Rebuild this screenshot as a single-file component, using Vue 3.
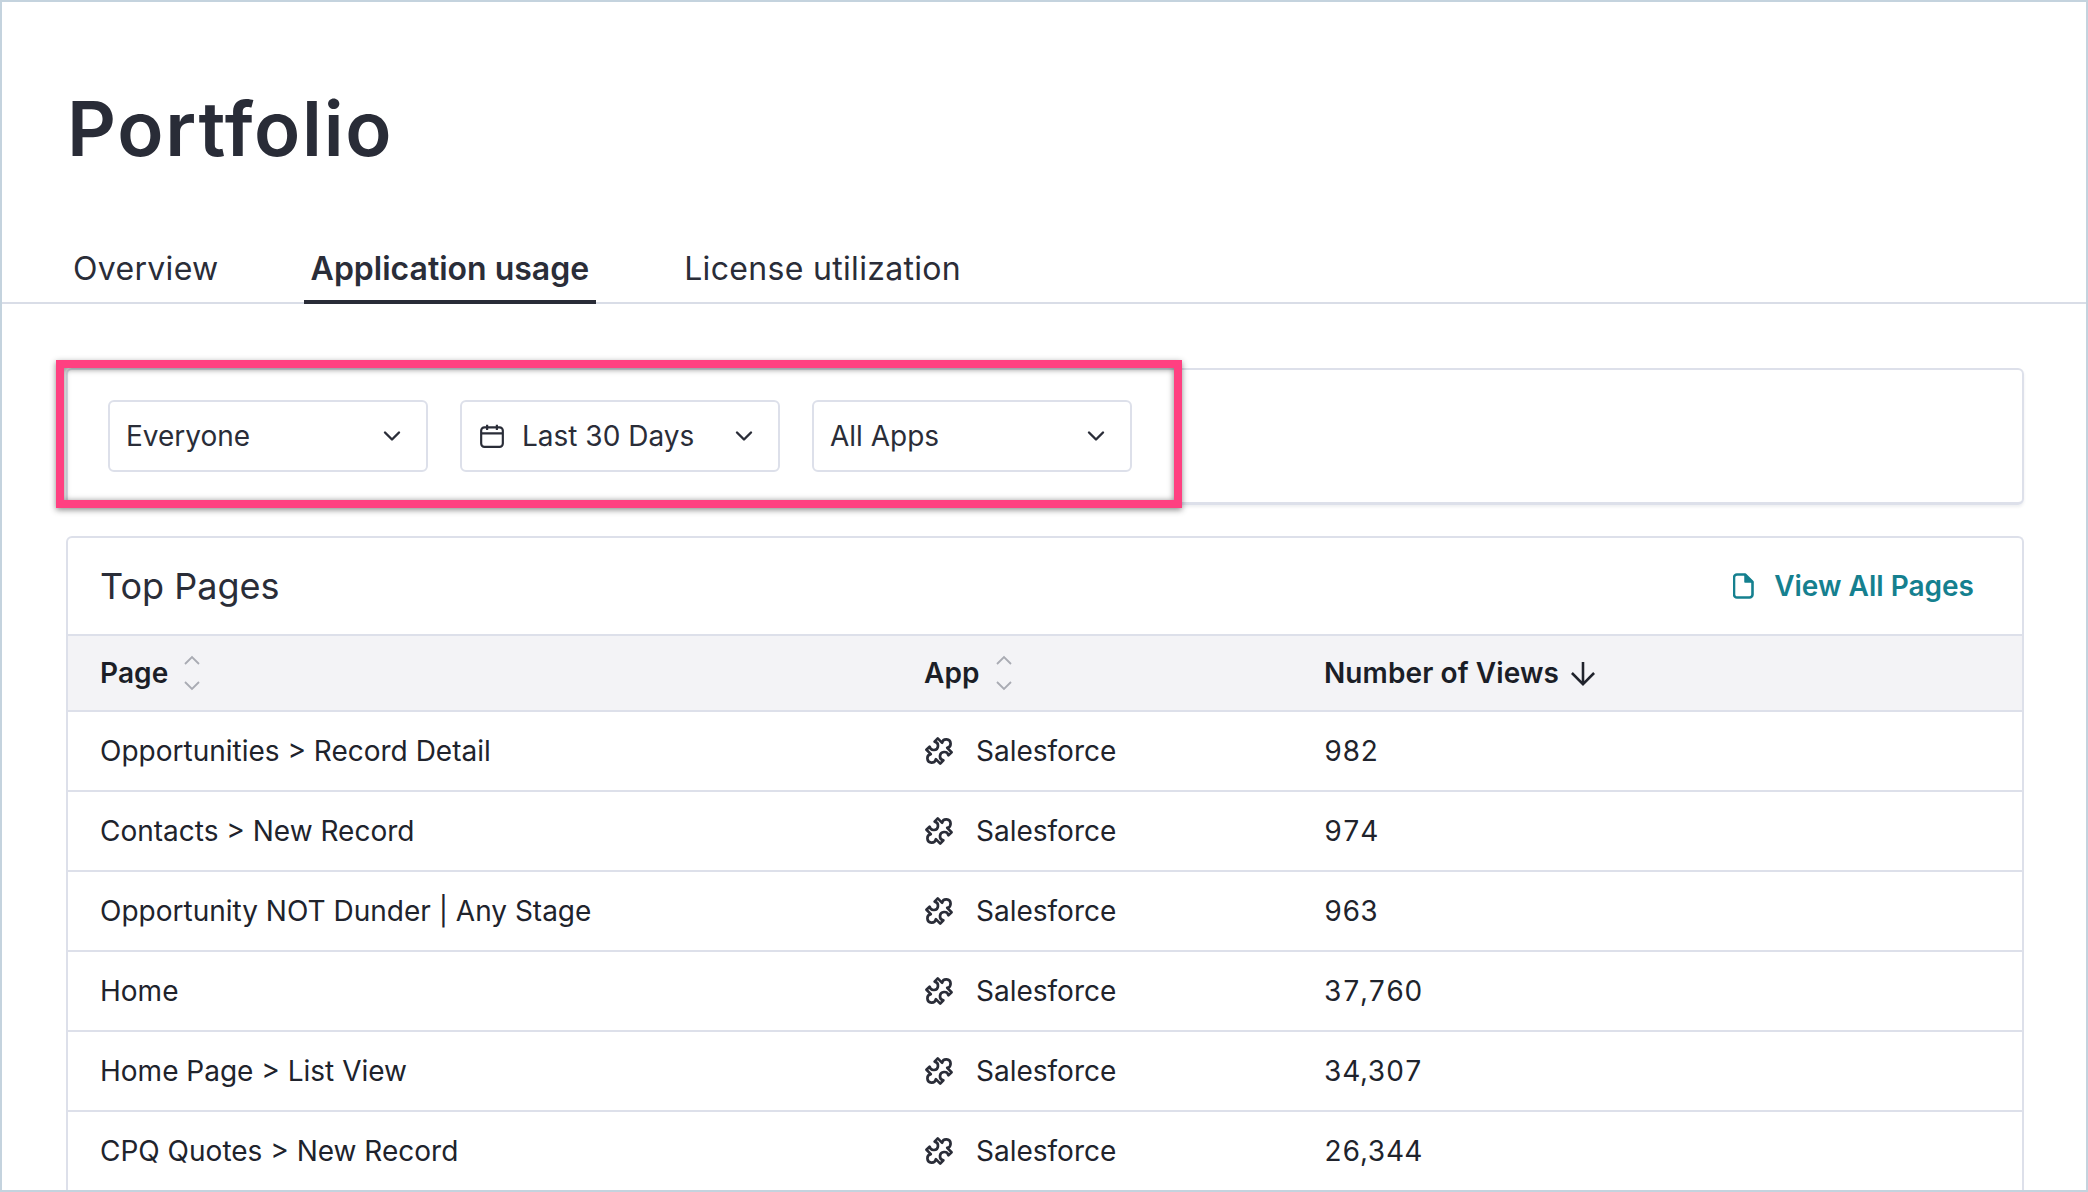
<script setup>
const tabs = [
  { label: 'Overview', active: false },
  { label: 'Application usage', active: true },
  { label: 'License utilization', active: false },
]
const rows = [
  ['Opportunities > Record Detail', '982'],
  ['Contacts > New Record', '974'],
  ['Opportunity NOT Dunder | Any Stage', '963'],
  ['Home', '37,760'],
  ['Home Page > List View', '34,307'],
  ['CPQ Quotes > New Record', '26,344'],
]
</script>

<template>
  <div class="page">
    <h1 class="title">Portfolio</h1>
    <nav class="tabs">
      <a v-for="t in tabs" :key="t.label" class="tab" :class="{ active: t.active }">{{ t.label }}</a>
    </nav>
    <main class="content">
      <section class="filters">
        <div class="select">
          <span>Everyone</span>
          <svg class="chev" viewBox="0 0 24 24"><path d="M5 8.500l7 7 7-7" /></svg>
        </div>
        <div class="select">
          <svg class="cal" viewBox="0 0 24 24"><rect x="2" y="4" width="20" height="18" rx="3" /><path d="M2 9.500h20M7.500 1.500v5M16.500 1.500v5" /></svg>
          <span class="grow">Last 30 Days</span>
          <svg class="chev" viewBox="0 0 24 24"><path d="M5 8.500l7 7 7-7" /></svg>
        </div>
        <div class="select">
          <span>All Apps</span>
          <svg class="chev" viewBox="0 0 24 24"><path d="M5 8.500l7 7 7-7" /></svg>
        </div>
        <div class="highlight"></div>
      </section>
      <section class="card">
        <header class="card-head">
          <h2>Top Pages</h2>
          <a class="link">
            <svg class="doc" viewBox="0 0 21 26"><path d="M4 1.500h8l7.500 7.500v12.500a3 3 0 0 1-3 3H4a3 3 0 0 1-3-3V4.500A3 3 0 0 1 4 1.500z" /><path class="fold" d="M12 1.500v7.500h7.500z" /></svg>
            View All Pages
          </a>
        </header>
        <div class="row thead">
          <div class="th">Page
            <svg class="sort" viewBox="0 0 16 36"><path d="M1 9l7-7 7 7M1 27l7 7 7-7" /></svg>
          </div>
          <div class="th">App
            <svg class="sort" viewBox="0 0 16 36"><path d="M1 9l7-7 7 7M1 27l7 7 7-7" /></svg>
          </div>
          <div class="th arrow-th">Number of Views
            <svg class="arrow" viewBox="0 0 24 24"><path d="M12 2.500v19M2.500 12l9.500 9.500 9.500-9.500" /></svg>
          </div>
        </div>
        <div v-for="r in rows" :key="r[0]" class="row tr">
          <div>{{ r[0] }}</div>
          <div class="app">
            <svg class="puzzle" viewBox="3 3 18 18"><path transform="rotate(45 12 12)" d="M6.500 7.500H10a2.400 2.400 0 1 1 4 0h3.500V10a2.400 2.400 0 1 0 0 4v2.500H14a2.400 2.400 0 1 1-4 0H6.500V14a2.400 2.400 0 1 0 0-4z" /></svg>
            Salesforce
          </div>
          <div class="num">{{ r[1] }}</div>
        </div>
      </section>
    </main>
  </div>
</template>

<style>
html, body { margin: 0; background: #fff; }
</style>

<style scoped>
* { box-sizing: border-box; }
.page {
  width: 2088px;
  height: 1192px;
  border: 2px solid #c4d3de;
  overflow: hidden;
  background: #fff;
  font-family: Inter, "Liberation Sans", sans-serif;
  color: #20232c;
  display: flex;
  flex-direction: column;
}
.title {
  margin: 0;
  padding: 82px 0 0 65px;
  font-size: 76px;
  line-height: 88px;
  font-weight: 600;
  letter-spacing: 1.700px;
  color: #292c37;
}
.tabs {
  margin-top: 62px;
  height: 70px;
  padding-left: 64px;
  display: flex;
  gap: 78px;
  border-bottom: 2px solid #d9dde7;
}
.tab {
  font-size: 32px;
  line-height: 70px;
  letter-spacing: 0.01em;
  padding: 0 7px;
  height: 70px;
  color: #2a2d38;
}
.tab.active {
  font-weight: 600;
  letter-spacing: 0;
  margin-right: 3px;
  border-bottom: 4px solid #292c37;
}
.content {
  flex: 1;
  min-height: 0;
  padding: 64px 62px 0 64px;
  display: flex;
  flex-direction: column;
  gap: 31px;
}
.filters {
  position: relative;
  flex: none;
  height: 137px;
  border: 2px solid #dde0ea;
  border-bottom-width: 3px;
  border-radius: 6px;
  padding: 30px 40px;
  display: flex;
  gap: 32px;
  box-shadow: 0 2px 3px rgba(40, 50, 80, 0.08);
}
.select {
  width: 320px;
  height: 72px;
  border: 2px solid #dde0ea;
  border-radius: 6px;
  padding: 0 22px 0 16px;
  display: flex;
  align-items: center;
  justify-content: space-between;
  font-size: 28px;
  color: #2a2d38;
}
.grow { flex: 1; }
.chev { width: 24px; height: 24px; fill: none; stroke: #2a2d38; stroke-width: 2.400; stroke-linecap: round; stroke-linejoin: round; }
.cal { width: 26px; height: 26px; margin: 0 17px 0 1px; fill: none; stroke: #2a2d38; stroke-width: 2; }
.highlight {
  position: absolute;
  left: -12px;
  top: -10px;
  width: 1126px;
  height: 148px;
  border: 8px solid #ff4081;
  box-shadow: 0 2px 6px rgba(0, 0, 0, 0.45), inset 0 1px 6px rgba(0, 0, 0, 0.5);
  pointer-events: none;
}
.card {
  flex: 1;
  min-height: 0;
  overflow: hidden;
  border: 2px solid #dde0ea;
  border-bottom: 0;
  border-radius: 6px 6px 0 0;
}
.card-head {
  height: 96px;
  padding: 0 48px 0 32px;
  display: flex;
  align-items: center;
  justify-content: space-between;
}
.card-head h2 {
  margin: 0;
  font-size: 36px;
  font-weight: 400;
  color: #2a2d38;
}
.link {
  display: flex;
  align-items: center;
  gap: 20px;
  font-size: 28px;
  font-weight: 600;
  color: #15808f;
}
.doc { width: 21px; height: 26px; fill: none; stroke: #15808f; stroke-width: 2.600; stroke-linejoin: round; }
.fold { fill: #15808f; stroke-width: 1.500; }
.row {
  display: grid;
  grid-template-columns: 824px 400px 1fr;
  align-items: center;
  padding-left: 32px;
  border-top: 2px solid #dde0ea;
}
.thead {
  height: 76px;
  background: #f3f3f6;
  font-size: 28px;
  font-weight: 600;
  letter-spacing: 0.100px;
  color: #1b1e27;
}
.th { display: flex; align-items: center; gap: 16px; }
.arrow-th { gap: 10px; }
.sort { width: 16px; height: 36px; fill: none; stroke: #a9abb3; stroke-width: 1.800; }
.arrow { width: 28px; height: 28px; fill: none; stroke: #20232c; stroke-width: 2.200; }
.tr {
  height: 80px;
  font-size: 28px;
  color: #20232c;
}
.num { font-variant-numeric: tabular-nums; }
.app { display: flex; align-items: center; gap: 21px; }
.puzzle { width: 32px; height: 32px; margin-left: -1px; fill: none; stroke: #2a2d38; stroke-width: 1.500; overflow: visible; stroke-linejoin: round; }
</style>
